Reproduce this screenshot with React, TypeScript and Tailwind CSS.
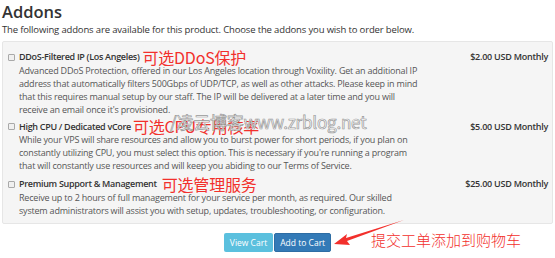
import { FC } from 'react';

interface Addon {
  name: string;
  note: string;
  noteGap: string;
  price: string;
  lines: string[];
}

const addons: Addon[] = [
  {
    name: 'DDoS-Filtered IP (Los Angeles)',
    note: '可选DDoS保护',
    noteGap: 'ml-[3px]',
    price: '$2.00 USD Monthly',
    lines: [
      'Advanced DDoS Protection, offered in our Los Angeles location through Voxility. Get an additional IP',
      'address that automatically filters 500Gbps of UDP/TCP, as well as other attacks. Please keep in mind',
      'that this requires manual setup by our staff. The IP will be delivered at a later time and you will',
      "receive an email once it's provisioned.",
    ],
  },
  {
    name: 'High CPU / Dedicated vCore',
    note: '可选CPU专用核率',
    noteGap: 'ml-[2px]',
    price: '$5.00 USD Monthly',
    lines: [
      'While your VPS will share resources and allow you to burst power for short periods, if you plan on',
      "constantly utilizing CPU, you must select this option. This is necessary if you're running a program",
      'that will constantly use resources and will keep you abiding to our Terms of Service.',
    ],
  },
  {
    name: 'Premium Support & Management',
    note: '可选管理服务',
    noteGap: 'ml-[5px]',
    price: '$25.00 USD Monthly',
    lines: [
      'Receive up to 2 hours of full management for your service per month, as required. Our skilled',
      'system administrators will assist you with setup, updates, troubleshooting, or configuration.',
    ],
  },
];

const AddonRow: FC<{ addon: Addon; watermark?: boolean }> = ({ addon, watermark }) => {
  return (
    <div className="relative flex">
      <span className="mt-[3px] mr-[4px] h-[7px] w-[7px] shrink-0 rounded-[1px] border border-[#a9a9a9] bg-[#f0f0f0]" />
      <div className="flex-1">
        <div className="flex h-[13px] items-center">
          <span className="text-[9px] font-semibold tracking-[-0.3px] text-[#333]">{addon.name}</span>
          <span
            className={`${addon.noteGap} text-[16px] leading-[13px] text-[#f2302c] [font-family:'Noto_Sans_CJK_SC',sans-serif]`}
          >
            {addon.note}
          </span>
          <span className="ml-auto text-[9px] font-semibold tracking-[-0.25px] text-[#333]">{addon.price}</span>
        </div>
        {addon.lines.map((line) => (
          <div key={line} className="text-[#555]">
            {line}
          </div>
        ))}
      </div>
      {watermark && (
        <span className="absolute left-[162px] top-[-7px] text-[17px] leading-none text-white [-webkit-text-stroke:0.7px_#999] [font-family:'Noto_Sans_CJK_SC',sans-serif]">
          /凌云博客www.zrblog.net
        </span>
      )}
    </div>
  );
};

const App: FC = () => {
  return (
    <div className="h-[258px] w-[555px] overflow-hidden bg-white px-[2px] text-[9px] leading-[13.3px] tracking-[-0.2px] text-[#333] [font-family:'Open_Sans',sans-serif]">
      <h3 className="pt-[2px] text-[16.5px] font-semibold leading-[20px] tracking-normal text-[#333]">Addons</h3>
      <p className="mt-[1px] text-[9.5px] leading-[13.5px] tracking-[-0.15px] text-[#333]">
        The following addons are available for this product. Choose the addons you wish to order below.
      </p>
      <div className="mt-[4px] flex flex-col gap-[3px] rounded-[2px] border border-[#e6e6e6] bg-[#f5f5f5] pt-[9px] pr-[4px] pb-[6px] pl-[5px]">
        <AddonRow addon={addons[0]} />
        <AddonRow addon={addons[1]} watermark />
        <div className="mt-[2px]">
          <AddonRow addon={addons[2]} />
        </div>
      </div>
      <div className="relative mt-[9px] flex justify-center gap-[1px] tracking-normal">
        <button className="h-[19px] rounded-[2px] bg-[#5bc0de] px-[6px] text-[8.5px] text-white">View Cart</button>
        <button className="h-[19px] rounded-[2px] border border-[#2e6da4] bg-[#337ab7] px-[5px] text-[8.5px] text-white">
          Add to Cart
        </button>
        <svg className="absolute left-[330px] top-[-14px]" width="75" height="32" viewBox="0 0 75 32">
          <path d="M72 1 L14 19 L15 15 L2 25 L18 26 L15 22 Z" fill="#f2302c" />
        </svg>
        <span className="absolute left-[369px] top-[-3px] text-[15px] font-light leading-[20px] text-[#f2302c] [font-family:'Noto_Sans_CJK_SC',sans-serif]">
          提交工单添加到购物车
        </span>
      </div>
    </div>
  );
};

export default App;
